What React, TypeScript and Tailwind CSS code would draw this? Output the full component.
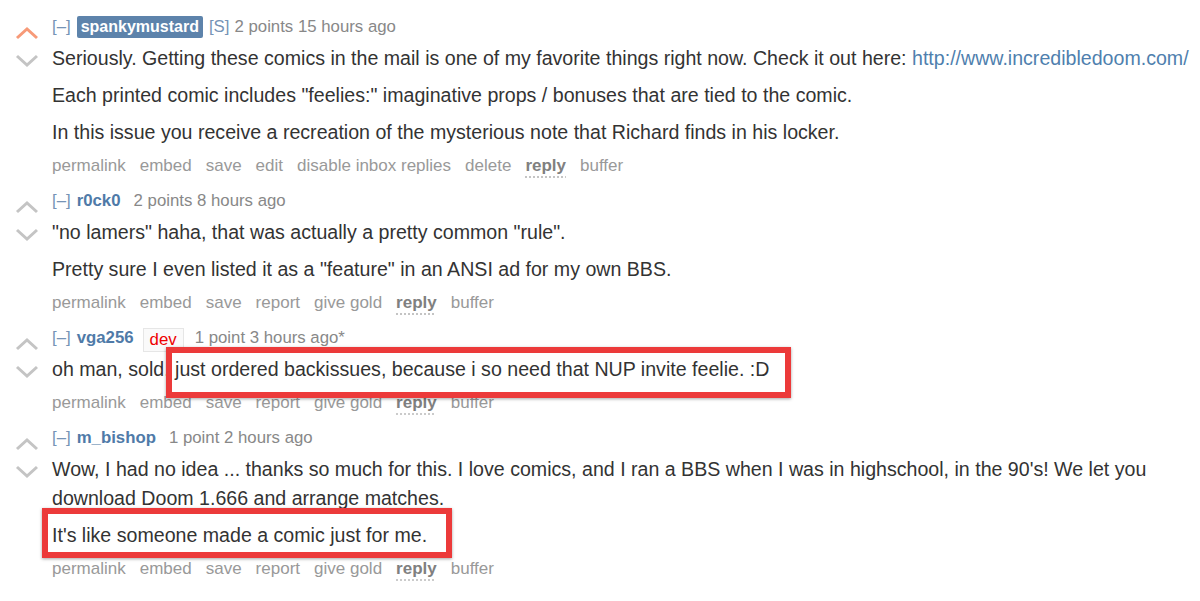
import React from "react";

function Arrow({ up, color }: { up?: boolean; color: string }) {
  return (
    <svg width="24" height="14" viewBox="0 0 24 14" fill="none">
      <path
        d={up ? "M2 12 L12 3 L22 12" : "M2 2 L12 11 L22 2"}
        stroke={color}
        strokeWidth="3"
        strokeLinejoin="miter"
      />
    </svg>
  );
}

type Comment = {
  user: string;
  op?: boolean;
  flair?: string;
  score: string;
  age: string;
  edited?: boolean;
  upvoted?: boolean;
  body: React.ReactNode[];
  actions: string[];
};

const comments: Comment[] = [
  {
    user: "spankymustard",
    op: true,
    score: "2 points",
    age: "15 hours ago",
    upvoted: true,
    body: [
      <>
        Seriously. Getting these comics in the mail is one of my favorite things right now. Check it out here:{" "}
        <a className="text-[#4f7fae]">http://www.incredibledoom.com/</a>
      </>,
      <>Each printed comic includes "feelies:" imaginative props / bonuses that are tied to the comic.</>,
      <>In this issue you receive a recreation of the mysterious note that Richard finds in his locker.</>,
    ],
    actions: ["permalink", "embed", "save", "edit", "disable inbox replies", "delete", "reply", "buffer"],
  },
  {
    user: "r0ck0",
    score: "2 points",
    age: "8 hours ago",
    body: [
      <>"no lamers" haha, that was actually a pretty common "rule".</>,
      <>Pretty sure I even listed it as a "feature" in an ANSI ad for my own BBS.</>,
    ],
    actions: ["permalink", "embed", "save", "report", "give gold", "reply", "buffer"],
  },
  {
    user: "vga256",
    flair: "dev",
    score: "1 point",
    age: "3 hours ago",
    edited: true,
    body: [<>oh man, sold. just ordered backissues, because i so need that NUP invite feelie. :D</>],
    actions: ["permalink", "embed", "save", "report", "give gold", "reply", "buffer"],
  },
  {
    user: "m_bishop",
    score: "1 point",
    age: "2 hours ago",
    body: [
      <>
        Wow, I had no idea ... thanks so much for this. I love comics, and I ran a BBS when I was in highschool, in the 90's! We let you download Doom 1.666 and arrange matches.
      </>,
      <>It's like someone made a comic just for me.</>,
    ],
    actions: ["permalink", "embed", "save", "report", "give gold", "reply", "buffer"],
  },
];

function CommentRow({ c }: { c: Comment }) {
  return (
    <div className="flex">
      <div className="w-[52px] shrink-0 flex flex-col items-center pt-[11px] gap-[14px] pl-[2px]">
        <Arrow up color={c.upvoted ? "#f79a78" : "#c4c4c4"} />
        <Arrow color="#c4c4c4" />
      </div>
      <div className="flex-1 min-w-0">
        <div className="flex items-center h-[24px] text-[16.8px] text-[#888]">
          <span className="text-[#7593b6]">[–]</span>
          {c.op ? (
            <span className="ml-[6px] bg-[#5d83ab] text-white text-[16px] font-bold px-[4px] rounded-[2px] leading-[22px]">
              {c.user}
            </span>
          ) : (
            <span className="ml-[6px] text-[#4f7aa8] font-bold">{c.user}</span>
          )}
          {c.op && <span className="ml-[6px] text-[#7593b6]">[S]</span>}
          {c.flair && (
            <span className="ml-[9px] mt-[3px] border border-[#e6e6e6] bg-[#fafafa] text-[#e00] px-[6px] leading-[22px]">
              {c.flair}
            </span>
          )}
          <span className={c.op ? "ml-[5px]" : c.flair ? "ml-[11px]" : "ml-[13px]"}>
            {c.score} {c.age}
            {c.edited ? "*" : ""}
          </span>
        </div>
        <div className="mt-[5px] text-[19.6px] text-[#333] leading-[29px] flex flex-col gap-[8px]">
          {c.body.map((b, i) => (
            <p key={i}>{b}</p>
          ))}
        </div>
        <div className="mt-[7px] flex gap-[14px] text-[17px] text-[#999] h-[24px] items-center">
          {c.actions.map((a) => (
            <span
              key={a}
              className={
                a === "reply"
                  ? "font-bold text-[#808080] underline decoration-dotted decoration-[#bbb] underline-offset-[5px]"
                  : ""
              }
            >
              {a}
            </span>
          ))}
        </div>
      </div>
    </div>
  );
}

export default function App() {
  return (
    <div
      className="relative w-[1200px] h-[601px] overflow-hidden bg-white pt-[15px] flex flex-col gap-[11px]"
      style={{ fontFamily: '"Liberation Sans", Arial, sans-serif' }}
    >
      {comments.map((c) => (
        <CommentRow key={c.user} c={c} />
      ))}
      {/* highlight boxes drawn over the text */}
      <div className="absolute left-[166px] top-[347px] w-[625px] h-[51px] border-[6px] border-[#ec3a3a] shadow-[0_1px_3px_rgba(0,0,0,0.35)]" />
      <div className="absolute left-[42px] top-[508px] w-[410px] h-[50px] border-[6px] border-[#ec3a3a] shadow-[0_1px_3px_rgba(0,0,0,0.35)]" />
    </div>
  );
}
